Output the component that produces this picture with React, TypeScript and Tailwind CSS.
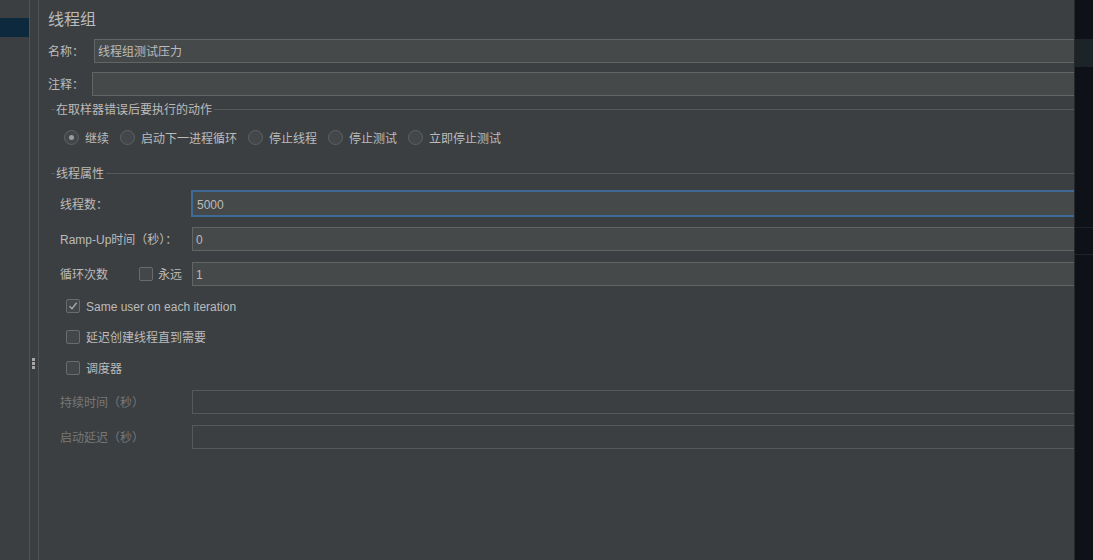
import React from "react";

const FONT = { fontFamily: '"Liberation Sans", "Noto Sans CJK SC", sans-serif' };

function Input({ value, focused, disabled }: { value?: string; focused?: boolean; disabled?: boolean }) {
  if (focused) {
    return (
      <div className="flex-1 h-[27px] border-2 border-r-0 border-[#3f6a96] bg-[#45494a] flex items-center pl-[4px] pt-[2px] text-[12px] text-[#bbbbbb]">
        {value}
      </div>
    );
  }
  return (
    <div
      className={
        "flex-1 h-[24px] border border-r-0 flex items-center pl-[3px] pt-[2px] text-[12px] text-[#bbbbbb] " +
        (disabled ? "border-[#56595b] bg-[#3c3f41]" : "border-[#646464] bg-[#45494a]")
      }
    >
      {value}
    </div>
  );
}

function Radio({ checked, label }: { checked?: boolean; label: string }) {
  return (
    <div className="flex items-center">
      <div className="w-[15px] h-[15px] rounded-full border border-[#5f6263] bg-[#43474a] flex items-center justify-center">
        {checked && <div className="w-[5px] h-[5px] rounded-full bg-[#9c9c9c]" />}
      </div>
      <span className="ml-[6px] pt-[2px] text-[12px] text-[#bbbbbb] leading-none">{label}</span>
    </div>
  );
}

function Check({ checked }: { checked?: boolean }) {
  return (
    <div className="w-[14px] h-[14px] rounded-[2px] border border-[#6b6b6b] bg-[#43474a] flex items-center justify-center">
      {checked && (
        <svg width="10" height="10" viewBox="0 0 10 10">
          <path d="M1.5 5.2 L4 7.8 L8.6 1.8" fill="none" stroke="#a9a9a9" strokeWidth="1.4" />
        </svg>
      )}
    </div>
  );
}

function GroupTitle({ text }: { text: string }) {
  return (
    <div className="flex items-center h-[16px] ml-[3px]">
      <div className="w-[4px] h-px bg-[#56595b]" />
      <span className="px-[1px] pt-[2px] text-[12px] text-[#bbbbbb] leading-none">{text}</span>
      <div className="flex-1 h-px bg-[#56595b] ml-[1px]" />
    </div>
  );
}

const LBL = "pt-[2px] text-[12px] ";

export default function App() {
  return (
    <div className="flex w-[1093px] h-[560px] bg-[#3c3f41] overflow-hidden" style={FONT}>
      {/* left tree */}
      <div className="w-[29px] pt-[18px]">
        <div className="h-[19px] bg-[#0d293e]" />
      </div>
      <div className="w-px bg-[#515457]" />
      <div className="w-[8px] relative">
        <div className="absolute left-[2px] top-[358px] flex flex-col gap-[1px]">
          <div className="w-[3px] h-[3px] bg-[#a8a8a8]" />
          <div className="w-[3px] h-[3px] bg-[#a8a8a8]" />
          <div className="w-[3px] h-[3px] bg-[#a8a8a8]" />
        </div>
      </div>
      <div className="w-px bg-[#515457]" />

      {/* main */}
      <div className="w-[1035px] flex flex-col pl-[9px]">
        <div className="h-[39px] pt-[9px] text-[16px] text-[#bbbbbb] leading-[22px]">线程组</div>

        <div className="flex items-center h-[24px]">
          <span className={LBL + "w-[46px] text-[#bbbbbb]"}>名称：</span>
          <Input value="线程组测试压力" />
        </div>
        <div className="flex items-center h-[24px] mt-[9px]">
          <span className={LBL + "w-[44px] text-[#bbbbbb]"}>注释：</span>
          <Input />
        </div>

        <div className="mt-[5px]">
          <GroupTitle text="在取样器错误后要执行的动作" />
        </div>
        <div className="flex items-center h-[15px] mt-[13px] ml-[16px] gap-[11px]">
          <Radio checked label="继续" />
          <Radio label="启动下一进程循环" />
          <Radio label="停止线程" />
          <Radio label="停止测试" />
          <Radio label="立即停止测试" />
        </div>

        <div className="mt-[20px]">
          <GroupTitle text="线程属性" />
        </div>

        <div className="flex items-center h-[27px] mt-[9px] pl-[12px]">
          <span className={LBL + "w-[131px] text-[#bbbbbb]"}>线程数：</span>
          <Input focused value="5000" />
        </div>
        <div className="flex items-center h-[24px] mt-[10px] pl-[12px]">
          <span className={LBL + "w-[132px] text-[#bbbbbb]"}>Ramp-Up时间（秒）：</span>
          <Input value="0" />
        </div>
        <div className="flex items-center h-[24px] mt-[11px] pl-[12px]">
          <span className={LBL + "w-[79px] text-[#bbbbbb]"}>循环次数</span>
          <Check />
          <span className={LBL + "w-[34px] ml-[5px] text-[#bbbbbb]"}>永远</span>
          <Input value="1" />
        </div>

        <div className="flex items-center h-[14px] mt-[13px] pl-[18px]">
          <Check checked />
          <span className={LBL + "ml-[6px] text-[#bbbbbb]"}>Same user on each iteration</span>
        </div>
        <div className="flex items-center h-[14px] mt-[17px] pl-[18px]">
          <Check />
          <span className={LBL + "ml-[6px] text-[#bbbbbb]"}>延迟创建线程直到需要</span>
        </div>
        <div className="flex items-center h-[14px] mt-[17px] pl-[18px]">
          <Check />
          <span className={LBL + "ml-[6px] text-[#bbbbbb]"}>调度器</span>
        </div>

        <div className="flex items-center h-[24px] mt-[15px] pl-[12px]">
          <span className={LBL + "w-[132px] text-[#777777]"}>持续时间（秒）</span>
          <Input disabled />
        </div>
        <div className="flex items-center h-[24px] mt-[11px] pl-[12px]">
          <span className={LBL + "w-[132px] text-[#777777]"}>启动延迟（秒）</span>
          <Input disabled />
        </div>
      </div>

      {/* right strip */}
      <div className="w-px bg-[#26282b]" />
      <div className="flex-1 bg-[#0e1118] flex flex-col">
        <div className="h-[39px]" />
        <div className="h-[28px] bg-[#1d2427]" />
        <div className="h-[160px]" />
        <div className="h-px bg-[#1e2328]" />
        <div className="h-[26px]" />
        <div className="h-px bg-[#1e2328]" />
      </div>
    </div>
  );
}
